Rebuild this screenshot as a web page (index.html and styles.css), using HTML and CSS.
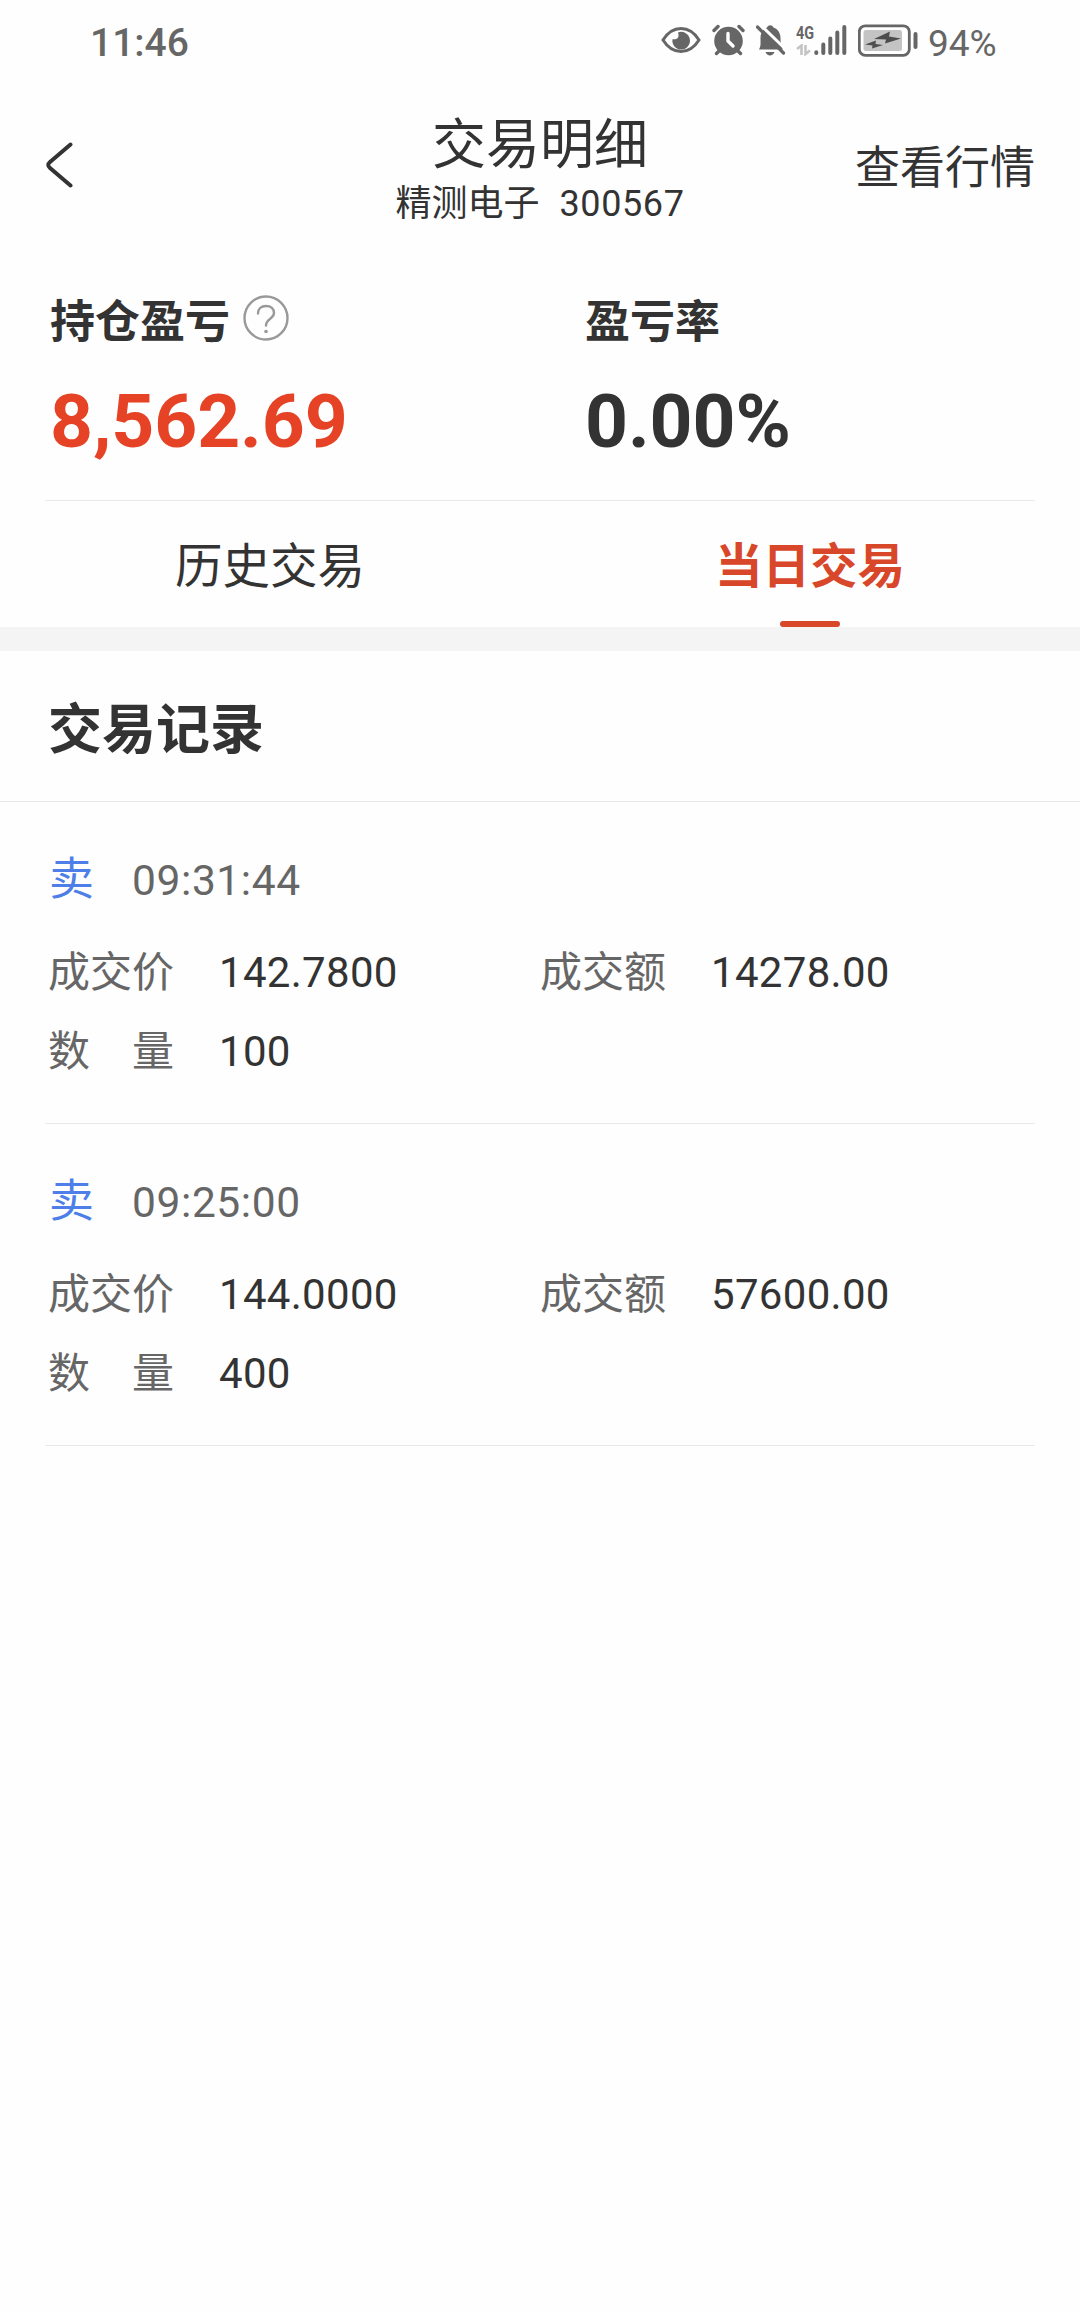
FILE: index.html
```html
<!DOCTYPE html>
<html lang="zh-CN">
<head>
<meta charset="utf-8">
<title>交易明细</title>
<link rel="stylesheet" href="styles.css">
</head>
<body>
<div class="status">
  <span class="status-time">11:46</span>
  <div class="status-icons">
    <svg class="ic-eye" width="40" height="28" viewBox="0 0 40 28" fill="none" stroke="#666" stroke-width="3">
      <path d="M2 14C7 6 13 2.500 20 2.500S33 6 38 14C33 22 27 25.500 20 25.500S7 22 2 14Z"/>
      <path d="M17 6.500C18.500 11 17 14 11.500 13.200A8.800 8.800 0 1 0 17 6.500Z" fill="#666" stroke="none"/>
    </svg>
    <svg class="ic-alarm" width="34" height="32" viewBox="0 0 34 32" fill="none" stroke="#666" stroke-width="3.400" stroke-linecap="round">
      <circle cx="16.500" cy="17" r="14.300" fill="#666" stroke="none"/>
      <path d="M2 6.500L6 2.500M31 6.500L27 2.500M7 27L4.500 29.500M26 27L28.500 29.500"/>
      <path d="M16 9.500V17L21 22" stroke="#fff"/>
    </svg>
    <svg class="ic-bell" width="32" height="32" viewBox="0 0 32 32">
      <path d="M3 25.500C5 22 4.500 19 4.500 14C4.500 9 7 5 11 3.500C12.500 .5 16 .5 17.500 3.500C22 5 24.500 9 24.500 14C24.500 19 25 22 27 25.500Z" fill="#666"/>
      <path d="M9.500 28H18.500C17 32.500 11 32.500 9.500 28Z" fill="#666"/>
      <path d="M4 .5L32 27.500" stroke="#fff" stroke-width="3"/>
      <path d="M1.500 3L27.500 29" stroke="#666" stroke-width="3.200" stroke-linecap="round"/>
    </svg>
    <div class="network">
      <span class="network-type">4G</span>
      <svg width="15" height="12" viewBox="0 0 15 12" fill="none" stroke="#c4c4c4" stroke-width="2.600"><path d="M1 5L5.500 1.500V11M9.500 1V10L14 6.500"/></svg>
    </div>
    <svg width="33" height="32" viewBox="0 0 33 32" stroke="#666" stroke-width="4" stroke-linecap="round"><path d="M2.300 28.200V29M9.300 20.500V29M16.300 14.500V29M23.300 8.500V29M30.300 3V29"/></svg>
    <svg class="ic-battery" width="60" height="33" viewBox="0 0 60 33">
      <rect x="1.300" y="1.800" width="50" height="29.500" rx="6" fill="#fff" stroke="#666" stroke-width="2.800"/>
      <rect x="5.500" y="6" width="38.500" height="21" rx="2.500" fill="#c4c4c4"/>
      <path d="M16 15L32 7.500L31 12.500L43 14.500L27 19.500L28 15.500ZM7 20.500L18 16.500L17.500 20L25 21L14 24.500L14.500 21.500Z" fill="#4d4d4d"/>
      <path d="M57.500 10V23" stroke="#666" stroke-width="4" stroke-linecap="round"/>
    </svg>
    <span class="status-level">94%</span>
  </div>
</div>

<header class="header">
  <svg width="28" height="48" viewBox="0 0 28 48" fill="none" stroke="#333" stroke-width="4" stroke-linecap="round" stroke-linejoin="round"><path d="M25.500 3.500L5 21Q1.500 24 5 27L25.500 44.500"/></svg>
  <div class="heading">
    <h1 class="title">交易明细</h1>
    <div class="subtitle"><span>精测电子</span><span class="code">300567</span></div>
  </div>
  <a class="action">查看行情</a>
</header>

<section class="summary">
  <div class="metric">
    <div class="metric-label"><span>持仓盈亏</span>
      <svg class="help" width="46" height="46" viewBox="0 0 46 46" fill="none" stroke="#999" stroke-width="2.400" stroke-linecap="round"><circle cx="23" cy="23" r="21.500"/><path d="M15 18.500C15 13.500 18.500 11 23 11C28 11 31 14 31 18C31 24 23 23.500 23 30.500"/><circle cx="23" cy="36.500" r="1.800" fill="#999" stroke="none"/></svg>
    </div>
    <div class="metric-value up">8,562.69</div>
  </div>
  <div class="metric">
    <div class="metric-label"><span>盈亏率</span></div>
    <div class="metric-value">0.00%</div>
  </div>
</section>

<nav class="tabs">
  <a class="tab">历史交易</a>
  <a class="tab active">当日交易</a>
</nav>

<h2 class="section-title">交易记录</h2>

<ul class="records">
  <li class="record">
    <div class="record-head"><span class="side">卖</span><span class="time">09:31:44</span></div>
    <dl class="fields">
      <div class="field"><dt>成交价</dt><dd>142.7800</dd></div>
      <div class="field"><dt>成交额</dt><dd>14278.00</dd></div>
      <div class="field"><dt>数　量</dt><dd>100</dd></div>
    </dl>
  </li>
  <li class="record">
    <div class="record-head"><span class="side">卖</span><span class="time">09:25:00</span></div>
    <dl class="fields">
      <div class="field"><dt>成交价</dt><dd>144.0000</dd></div>
      <div class="field"><dt>成交额</dt><dd>57600.00</dd></div>
      <div class="field"><dt>数　量</dt><dd>400</dd></div>
    </dl>
  </li>
</ul>
</body>
</html>
```
FILE: styles.css
```css
* { box-sizing: border-box; }
body, h1, h2, ul, dl, dd { margin: 0; padding: 0; }
body {
  min-height: 2312px;
  background: #fefefe;
  color: #333;
  font-family: "Noto Sans CJK SC", sans-serif;
}
svg { display: block; flex: none; }

.status {
  display: flex;
  justify-content: space-between;
  height: 80px;
  padding: 0 83px 0 90px;
  color: #666;
}
.status-time, .status-level, .code, .metric-value, .time, dd {
  font-family: Roboto, sans-serif;
  white-space: nowrap;
}
.status-time { font-size: 39px; line-height: 87px; font-weight: 500; }
.status-icons { display: flex; align-items: flex-start; padding-top: 24px; }
.ic-eye { margin-top: 2px; }
.ic-alarm { margin-left: 11px; }
.ic-bell { margin-left: 10px; }
.network { width: 18px; margin-left: 8px; }
.network-type {
  display: block;
  font: 700 18px/18px "Roboto", sans-serif;
  height: 20px;
  transform: scaleX(.8);
  transform-origin: left;
}
.ic-battery { margin: 0 0 0 11px; }
.status-level { width: 69px; margin-left: 10px; font-size: 37px; line-height: 39px; }

.header {
  display: grid;
  grid-template-columns: 1fr auto 1fr;
  align-items: center;
  height: 170px;
  padding: 0 45px;
}
.heading { display: flex; flex-direction: column; align-items: center; gap: 9px; padding-top: 2px; }
.title { font-size: 54px; line-height: 60px; font-weight: 400; }
.subtitle { display: flex; align-items: baseline; gap: 20px; font-size: 36px; line-height: 40px; }
.code { letter-spacing: .6px; line-height: 36px; }
.action { justify-self: end; font-size: 45px; line-height: 50px; }

.summary {
  display: grid;
  grid-template-columns: 535px 1fr;
  margin: 0 45px;
  padding: 46px 0 50px 5px;
  border-bottom: 1px solid #e8e8e8;
}
.metric { display: flex; flex-direction: column; gap: 49px; }
.metric-label { display: flex; align-items: center; gap: 13px; height: 45px; font-size: 45px; line-height: 45px; font-weight: 700; }
.help { margin-bottom: 2px; }
.metric-value { font-size: 75px; line-height: 62px; height: 60px; font-weight: 700; letter-spacing: -.1px; }
.up { color: #e64326; }

.tabs { display: grid; grid-template-columns: 1fr 1fr; height: 150px; border-bottom: 24px solid #f4f4f4; }
.tab { display: flex; flex-direction: column; align-items: center; justify-content: space-between; padding-top: 38px; font-size: 47.500px; line-height: 48px; }
.active { color: #d9472b; font-weight: 700; }
.active::after { content: ""; width: 60px; height: 6px; border-radius: 3px; background: #d9472b; }

.section-title { height: 151px; padding-left: 48px; border-bottom: 1px solid #e8e8e8; font-size: 54px; line-height: 149px; font-weight: 700; }

.records { list-style: none; padding: 0 45px; }
.record { height: 322px; padding: 49px 0 0 3px; border-bottom: 1px solid #e8e8e8; }
.record-head { display: flex; align-items: baseline; gap: 38px; height: 50px; margin-left: 1px; }
.side { color: #4e7fe8; font-size: 45px; line-height: 50px; }
.time { color: #666; font-size: 42.500px; line-height: 42px; letter-spacing: .6px; }
.fields { display: grid; grid-template-columns: 492px 1fr; row-gap: 29px; margin-top: 43px; }
.field { display: flex; align-items: baseline; gap: 45px; height: 50px; }
dt { color: #666; font-size: 42px; line-height: 50px; }
dd { font-size: 42px; line-height: 42px; letter-spacing: .3px; }
```
